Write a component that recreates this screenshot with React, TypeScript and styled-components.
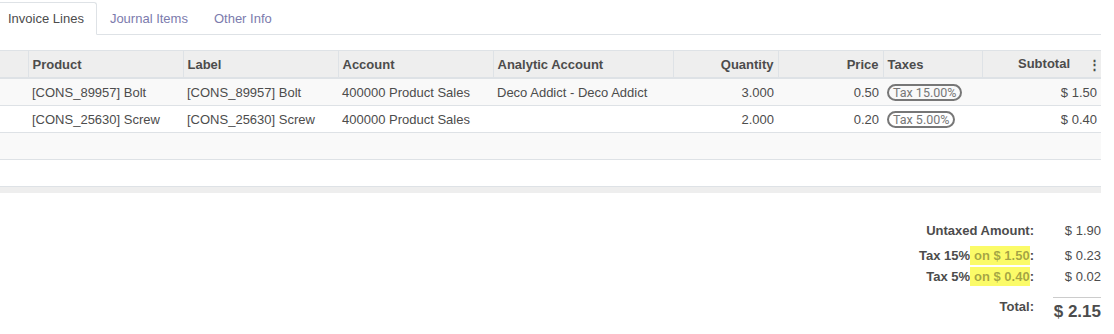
import React from "react";
import styled, { createGlobalStyle } from "styled-components";

const Global = createGlobalStyle`
  html, body { margin: 0; padding: 0; background: #fff; }
  body { font-family: "Liberation Sans", Arial, sans-serif; font-size: 13px; color: #4c4c4c; overflow: hidden; }
`;

const Page = styled.div`
  width: 1101px;
  padding-top: 2px;
`;

const TabBar = styled.ul`
  display: flex;
  list-style: none;
  margin: 0 0 0 -5px;
  padding: 0;
  border-bottom: 1px solid #dee2e6;
  height: 32px;
`;

const Tab = styled.li<{ $active?: boolean }>`
  display: flex;
  align-items: center;
  padding: 0 12px 1px;
  box-sizing: border-box;
  margin-bottom: -1px;
  border: 1px solid ${(p) => (p.$active ? "#dee2e6" : "transparent")};
  border-bottom-color: ${(p) => (p.$active ? "#fff" : "transparent")};
  background: ${(p) => (p.$active ? "#fff" : "transparent")};
  color: ${(p) => (p.$active ? "#4c4c4c" : "#7c7bad")};
  border-radius: 3px 3px 0 0;
  height: 33px;
`;

const Table = styled.table`
  margin-top: 15px;
  width: 1101px;
  border-collapse: collapse;
  table-layout: fixed;
`;

const Th = styled.th<{ $right?: boolean }>`
  background: #eeeeee;
  border-top: 1px solid #dee2e6;
  border-left: 1px solid #dee2e6;
  border-bottom: 2px solid #dee2e6;
  height: 26px;
  padding: 0 4px;
  font-weight: 700;
  text-align: ${(p) => (p.$right ? "right" : "left")};
  color: #4c4c4c;
  white-space: nowrap;
  &:first-child { border-left: none; }
  &:last-child { padding-right: 0; }
`;

const Tr = styled.tr<{ $shade?: boolean }>`
  background: ${(p) => (p.$shade ? "#f9f9f9" : "#fff")};
  border-bottom: 1px solid #dee2e6;
`;

const Td = styled.td<{ $right?: boolean }>`
  height: 26px;
  padding: 0 4px;
  text-align: ${(p) => (p.$right ? "right" : "left")};
  white-space: nowrap;
  overflow: hidden;
`;

const FootRow = styled.tr`
  background: #eeeeee;
  td { padding: 0; height: 6px; }
`;

const Badge = styled.span`
  display: inline-block;
  border: 2px solid #777;
  border-radius: 10px;
  color: #777;
  font-family: Roboto, "Liberation Sans", sans-serif;
  font-size: 12.5px;
  line-height: 13px;
  padding: 0 4px;
`;

const Kebab = styled.span`
  display: inline-block;
  margin-left: 18px;
  font-weight: 900;
  vertical-align: middle;
`;

const Totals = styled.div`
  display: grid;
  grid-template-columns: auto 67px;
  justify-content: end;
  margin-top: 28px;
`;

const Label = styled.div<{ $gap?: number }>`
  text-align: right;
  font-weight: 700;
  color: #4c4c4c;
  padding-top: ${(p) => p.$gap ?? 0}px;
  height: 20px;
  line-height: 20px;
`;

const Value = styled.div<{ $gap?: number }>`
  text-align: right;
  color: #4c4c4c;
  padding-top: ${(p) => p.$gap ?? 0}px;
  height: 20px;
  line-height: 20px;
`;

const Hl = styled.span`
  background: #fbfb68;
  color: rgba(0, 0, 0, 0.36);
  padding: 0 0 0 4px;
  display: inline-block;
  line-height: 19px;
`;

const TotalLabel = styled.div`
  margin-top: 10px;
  text-align: right;
  font-weight: 700;
  line-height: 20px;
`;

const TotalValue = styled.div`
  margin-top: 10px;
  margin-left: 19px;
  border-top: 1px solid #ccc;
  text-align: right;
  font-size: 17px;
  font-weight: 700;
  color: #4c4c4c;
  padding-top: 3px;
  line-height: 22px;
`;

const cols = [28, 155, 155, 155, 180, 105, 105, 99, 119];

const rows = [
  { p: "[CONS_89957] Bolt", l: "[CONS_89957] Bolt", a: "400000 Product Sales", an: "Deco Addict - Deco Addict", q: "3.000", pr: "0.50", t: "Tax 15.00%", s: "$ 1.50" },
  { p: "[CONS_25630] Screw", l: "[CONS_25630] Screw", a: "400000 Product Sales", an: "", q: "2.000", pr: "0.20", t: "Tax 5.00%", s: "$ 0.40" },
];

export default function App() {
  return (
    <Page>
      <Global />
      <TabBar>
        <Tab $active>Invoice Lines</Tab>
        <Tab>Journal Items</Tab>
        <Tab>Other Info</Tab>
      </TabBar>
      <Table>
        <colgroup>
          {cols.map((w, i) => (
            <col key={i} style={{ width: w }} />
          ))}
        </colgroup>
        <thead>
          <tr>
            <Th></Th>
            <Th>Product</Th>
            <Th>Label</Th>
            <Th>Account</Th>
            <Th>Analytic Account</Th>
            <Th $right>Quantity</Th>
            <Th $right>Price</Th>
            <Th>Taxes</Th>
            <Th $right>
              Subtotal<Kebab>⋮</Kebab>
            </Th>
          </tr>
        </thead>
        <tbody>
          {rows.map((r, i) => (
            <Tr key={i} $shade={i % 2 === 0}>
              <Td></Td>
              <Td>{r.p}</Td>
              <Td>{r.l}</Td>
              <Td>{r.a}</Td>
              <Td>{r.an}</Td>
              <Td $right>{r.q}</Td>
              <Td $right>{r.pr}</Td>
              <Td>
                <Badge>{r.t}</Badge>
              </Td>
              <Td $right>{r.s}</Td>
            </Tr>
          ))}
          <Tr $shade>
            <Td colSpan={9}></Td>
          </Tr>
          <Tr>
            <Td colSpan={9}></Td>
          </Tr>
          <FootRow>
            <td colSpan={9}></td>
          </FootRow>
        </tbody>
      </Table>
      <Totals>
        <Label>Untaxed Amount:</Label>
        <Value>$ 1.90</Value>
        <Label $gap={5}>
          Tax 15%<Hl>on $ 1.50</Hl>:
        </Label>
        <Value $gap={5}>$ 0.23</Value>
        <Label $gap={1}>
          Tax 5%<Hl>on $ 0.40</Hl>:
        </Label>
        <Value $gap={1}>$ 0.02</Value>
        <TotalLabel>Total:</TotalLabel>
        <TotalValue>$ 2.15</TotalValue>
      </Totals>
    </Page>
  );
}
